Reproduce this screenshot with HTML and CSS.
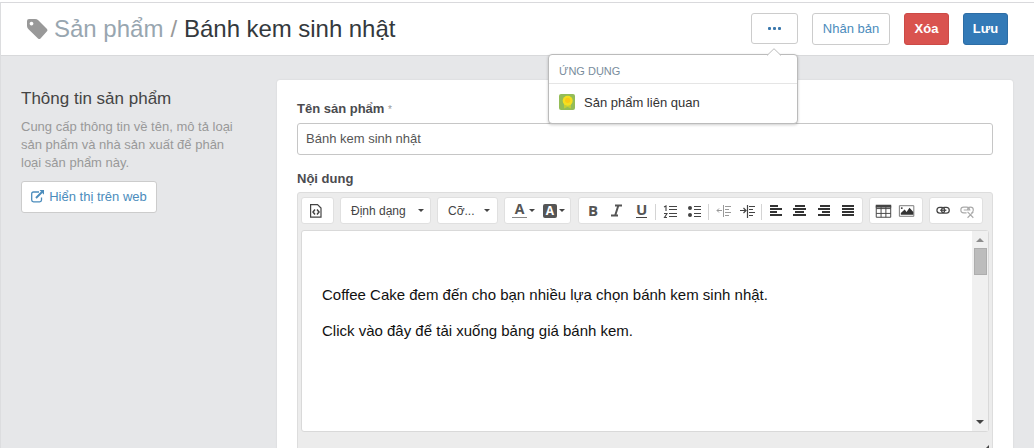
FILE: index.html
```html
<!DOCTYPE html>
<html lang="vi">
<head>
<meta charset="utf-8">
<title>Sản phẩm / Bánh kem sinh nhật</title>
<link rel="stylesheet" href="styles.css">
</head>
<body>
<div class="page">
  <header class="topbar">
    <h1 class="title">
      <svg class="tag" width="21" height="21" viewBox="0 0 21 21"><path fill="#999" fill-rule="evenodd" d="M0 2Q0 0 2 0H8Q10 0 11.300 1.300L20 10Q21 11.200 20 12.300L13.500 19.500Q12.300 20.600 11 19.500L1.500 10.300Q0 9 0 7ZM4.500 2.700A1.900 1.900 0 1 0 4.510 2.700Z"/></svg>
      <a class="crumb">Sản phẩm</a><span class="slash">/</span><span class="current">Bánh kem sinh nhật</span>
    </h1>
    <div class="actions">
      <div class="more">
        <button class="btn btn-more"><i></i><i></i><i></i></button>
        <div class="popover">
          <svg class="arrow" width="14" height="8" viewBox="0 0 14 8"><path d="M0 7.500L7 .7L14 7.500" fill="#fff" stroke="#bbb"/></svg>
          <div class="pop-head">ỨNG DỤNG</div>
          <div class="pop-item">
            <svg width="16" height="16" viewBox="0 0 16 16"><rect width="16" height="16" rx="2" fill="#94bd57"/><path d="M5 10H12V14.500L8.500 13L5 14.500Z" fill="#c3cf35"/><circle cx="8.700" cy="6.800" r="5" fill="#f5df20"/><circle cx="8.700" cy="6.300" r="2.600" fill="#fbc915"/></svg>
            <span>Sản phẩm liên quan</span>
          </div>
        </div>
      </div>
      <button class="btn btn-copy">Nhân bản</button>
      <button class="btn btn-delete">Xóa</button>
      <button class="btn btn-save">Lưu</button>
    </div>
  </header>
  <main class="main">
    <aside class="side">
      <h2>Thông tin sản phẩm</h2>
      <p>Cung cấp thông tin về tên, mô tả loại<br>sản phẩm và nhà sản xuất để phân<br>loại sản phẩm này.</p>
      <button class="btn btn-web">
        <svg width="14" height="13" viewBox="0 0 14 13" fill="none" stroke="#4b8cbc" stroke-width="1.300"><path d="M8 2H2.500Q.7 2 .7 3.800V10Q.7 11.800 2.500 11.800H8.700Q10.500 11.800 10.500 10V7.500"/><path d="M5 8L11 2" stroke-width="1.900"/><path d="M8.500 0H13V4.700Z" fill="#4b8cbc" stroke="none"/></svg>
        <span>Hiển thị trên web</span>
      </button>
    </aside>
    <section class="card">
      <label class="name-label">Tên sản phẩm <span class="req">*</span></label>
      <div class="input"><span>Bánh kem sinh nhật</span></div>
      <label class="content-label">Nội dung</label>
      <div class="editor">
        <div class="toolbar">
          <div class="group g-source"><svg width="12" height="14" viewBox="0 0 12 14" fill="none" stroke="#444" stroke-width="1.200"><path d="M.6 .6H7.500L11 4V13.200H.6Z"/><path d="M5 5.500L3 8L5 10.500M7 5.500L9 8L7 10.500" stroke-width="1.500"/></svg></div>
          <div class="group g-format"><span class="format">Định dạng</span><i class="caret"></i></div>
          <div class="group g-size"><span>Cỡ...</span><i class="caret"></i></div>
          <div class="group g-color">
            <span class="fg">A</span><i class="caret"></i><span class="bg">A</span><i class="caret"></i>
          </div>
          <div class="group g-text">
            <svg width="283" height="26" viewBox="0 0 283 26" stroke="#444" stroke-width="1.500" fill="none">
              <g font-family="Open Sans, sans-serif" font-size="15" font-weight="700" fill="#555" stroke="none"><text x="9" y="18">B</text><text x="57" y="17">U</text></g>
              <path d="M36 7.500H43M32 17.500H39M39.500 7L36 18" stroke="#555" stroke-width="2"/>
              <path d="M57 19.500H68" stroke-width="1"/>
              <path d="M76.500 6V22M129.500 6V22M182.500 6V22" stroke="#d4d4d4" stroke-width="1"/>
              <path d="M90 8.500H98M90 11.500H98M90 15.500H98M90 18.500H98" stroke-width="1"/>
              <path d="M85 9L87 8V13M85 15.500H88L85.500 19.500H88" stroke-width="1.100"/>
              <path d="M115 8.500H122M115 11.500H122M115 15.500H122M115 18.500H122" stroke-width="1"/>
              <circle cx="111" cy="10" r="2" fill="#444" stroke="none"/><circle cx="111" cy="17" r="2" fill="#444" stroke="none"/>
              <g stroke="#999" stroke-width="1"><path d="M138 12.500H143M140 10.500L138 12.500L140 14.500M144.500 7V19M146 8.500H152M146 11.500H150M146 14.500H152M146 17.500H150"/></g>
              <g stroke="#444" stroke-width="1.200"><path d="M161 12.500H167M164.500 10L167 12.500L164.500 15M168.500 7V20M170 8.500H176M170 11.500H174M170 14.500H176M170 17.500H174"/></g>
              <g stroke="#333" stroke-width="2"><path d="M191 8H199M191 11H203M191 14H198M191 17H203M216 8H226M214 11H227M216 14H225M214 17H227M241 8H251M239 11H251M243 14H251M239 17H251M263 8H275M263 11H275M263 14H275M263 17H275"/></g>
            </svg>
          </div>
          <div class="group g-insert">
            <svg width="54" height="26" viewBox="0 0 54 26" fill="none" stroke="#444"><path d="M6.500 7.500H21.500V19.500H6.500ZM6.500 10.500H21.500M6.500 15.500H21.500M11.500 9V19.500M16.500 9V19.500"/><path d="M6 8H22" stroke-width="3"/><path d="M30.500 7.500H45.500V18.500H30.500Z" stroke="#777"/><path d="M32 17V15L36 11.500L38 14L41 9.500L45 14V17Z" fill="#333" stroke="none"/><circle cx="33" cy="10" r="1" fill="#333" stroke="none"/></svg>
          </div>
          <div class="group g-link">
            <svg width="54" height="26" viewBox="0 0 54 26" fill="none" stroke="#444" stroke-width="1.300"><rect x="7.200" y="9.200" width="8" height="6" rx="3"/><rect x="12" y="9.200" width="8" height="6" rx="3"/><path d="M10.500 12.200H17"/><g stroke="#aaa" stroke-width="1.200"><path d="M38 15H35Q32 15 32 12T35 9H38Q41 9 41 12M39 12Q39 9 42 9Q45 9 45 12Q45 14 43 15M35 12H42M39 14L45 20M45 14L39 20"/></g></svg>
          </div>
        </div>
        <div class="doc">
          <div class="doc-text"><p>Coffee Cake đem đến cho bạn nhiều lựa chọn bánh kem sinh nhật.</p><p>Click vào đây để tải xuống bảng giá bánh kem.</p></div>
          <div class="scroll"><i class="up"></i><i class="thumb"></i><i class="down"></i></div>
        </div>
        <svg class="grip" width="6" height="6" viewBox="0 0 6 6"><path d="M6 0V6H0Z" fill="#444"/></svg>
      </div>
    </section>
  </main>
</div>
</body>
</html>
```
FILE: styles.css
```css
* { box-sizing: border-box; }
body { margin: 0; background: #fff; font-family: "Liberation Sans", Arial, sans-serif; font-size: 13px; color: #444; overflow: hidden; }
h1, h2, p { margin: 0; font-weight: 400; }
button { font: inherit; padding: 0; white-space: nowrap; }
.page { height: 446px; margin-top: 2px; border-top: 1px solid #d9d9dc; border-left: 1px solid #dcdddf; background: #e6e7e9; overflow: hidden; }
.topbar { height: 53px; background: #fff; border-bottom: 1px solid #d8d9db; display: flex; justify-content: space-between; align-items: flex-start; padding: 10px 26px 0 26px; }
.title { display: flex; align-items: center; font-size: 24px; line-height: 32px; white-space: nowrap; }
.tag { margin-right: 6px; }
.crumb { color: #98a6b0; }
.slash { color: #999; margin: 0 7px; }
.current { color: #34393d; letter-spacing: -.05px; }
.actions { display: flex; gap: 14px; }
.btn { height: 32px; border: 1px solid #ccc; border-radius: 3px; background: #fff; display: flex; align-items: center; justify-content: center; color: #4b8cbc; }
.more { position: relative; }
.btn-more { width: 47px; height: 31px; gap: 2px; }
.btn-more i { width: 3px; height: 3px; border-radius: 1px; background: #3b78ad; }
.btn-copy { width: 78px; padding-bottom: 2px; }
.btn-delete { width: 45px; padding-bottom: 2px; background: #d9534f; border-color: #cc4a46; color: #fff; font-weight: 700; }
.btn-save { width: 45px; padding-bottom: 2px; background: #337ab7; border-color: #2d6da5; color: #fff; font-weight: 700; }
.popover { position: absolute; z-index: 2; top: 41px; right: 0; width: 250px; height: 70px; background: #fff; border: 1px solid #bbb; border-radius: 4px; box-shadow: 0 1px 3px rgba(0,0,0,.2); }
.arrow { position: absolute; top: -7px; right: 16px; }
.pop-head { height: 29px; border-bottom: 1px solid #e5e5e5; padding-left: 10px; font-size: 11px; line-height: 33px; color: #798c9c; }
.pop-item { display: flex; align-items: center; gap: 9px; padding: 9px 10px 11px; height: 38px; color: #333; }
.main { display: flex; padding: 24px 20px 0 20px; }
.side { width: 256px; padding-top: 10px; }
.side h2 { font-size: 17px; line-height: 18px; color: #444; margin-bottom: 10px; white-space: nowrap; }
.side p { line-height: 18px; color: #999; white-space: nowrap; }
.btn-web { width: 136px; margin-top: 9px; gap: 4px; padding-bottom: 2px; }
.card { width: 736px; height: 370px; background: #fff; border-radius: 3px 3px 0 0; padding: 20px 20px 0; box-shadow: 0 0 2px rgba(0,0,0,.1); }
.card label { display: block; font-weight: 700; line-height: 18px; color: #4b4b4f; }
.card .req { font-weight: 400; font-size: 10px; color: #999; }
.input { height: 32px; margin: 4px 0 15px; border: 1px solid #c6c6c6; border-radius: 3px; padding: 0 8px; line-height: 30px; color: #555; }
.editor { position: relative; height: 270px; margin-top: 4px; border: 1px solid #ddd; border-radius: 3px; background: #ececec; padding: 4px 3px 0; }
.toolbar { display: flex; height: 33px; }
.group { height: 27px; background: #fff; border: 1px solid #e0e0e0; border-radius: 3px; display: flex; align-items: center; margin-right: 6px; flex: none; font-size: 12px; }
.g-source { width: 33px; padding-left: 8px; }
.g-format { width: 91px; padding: 0 6px 0 10px; justify-content: space-between; }
.g-size { width: 61px; padding: 0 7px 0 10px; justify-content: space-between; }
.g-color { width: 67px; padding-left: 7px; }
.g-text { width: 285px; margin-left: 1px; }
.g-insert { width: 54px; }
.g-link { width: 54px; }
.caret { border: 3px solid transparent; border-top-color: #444; border-bottom: 0; flex: none; }
.fg { width: 15px; height: 15px; border-bottom: 1px solid #888; margin-right: 2px; text-align: center; font: 700 14px/12px "Open Sans", sans-serif; color: #555; }
.bg { width: 14px; height: 14px; border-radius: 2px; background: #555; color: #fff; text-align: center; font: 700 12px/14px "Open Sans", sans-serif; margin: 0 2px 0 8px; }
.doc { display: flex; height: 202px; background: #fff; border: 1px solid #d9d9d9; border-radius: 3px; }
.doc-text { flex: 1; padding: 55px 0 0 20px; font-size: 15px; line-height: 18px; color: #111; white-space: nowrap; }
.doc-text p { margin-bottom: 18px; }
.scroll { width: 16px; background: #f0f0f0; display: flex; flex-direction: column; align-items: center; padding-top: 7px; }
.up { border: 4px solid transparent; border-bottom-color: #8d8d8d; border-top: 0; }
.thumb { width: 13px; height: 27px; background: #bcbcbc; border: 1px solid #adadad; margin-top: 6px; }
.down { border: 4px solid transparent; border-top-color: #444; border-bottom: 0; margin: auto 0 7px; }
.grip { position: absolute; right: 3px; top: 252px; }
```
